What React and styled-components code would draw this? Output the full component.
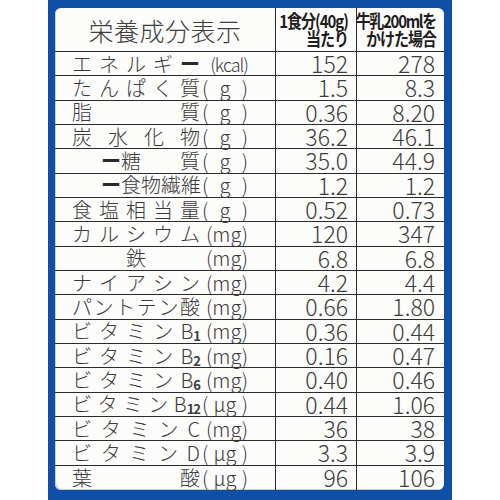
import React from "react";
import styled, { createGlobalStyle } from "styled-components";

const GlobalStyle = createGlobalStyle`
  body {
    margin: 0;
    background: #ffffff;
    font-family: "Noto Sans CJK JP", "Noto Sans", sans-serif;
  }
`;

const rows = [
  { name: ["エ", "ネ", "ル", "ギ", "ー"], unit: ["(kcal)"], a: "152", b: "278" },
  { name: ["た", "ん", "ぱ", "く", "質"], unit: ["(", "g", ")"], a: "1.5", b: "8.3" },
  { name: ["脂", "質"], unit: ["(", "g", ")"], a: "0.36", b: "8.20" },
  { name: ["炭", "水", "化", "物"], unit: ["(", "g", ")"], a: "36.2", b: "46.1" },
  { name: ["ー糖", "質"], indent: 29, unit: ["(", "g", ")"], a: "35.0", b: "44.9" },
  { name: ["ー", "食", "物", "繊", "維"], indent: 29, unit: ["(", "g", ")"], a: "1.2", b: "1.2" },
  { name: ["食", "塩", "相", "当", "量"], unit: ["(", "g", ")"], a: "0.52", b: "0.73" },
  { name: ["カ", "ル", "シ", "ウ", "ム"], unit: ["(mg)"], a: "120", b: "347" },
  { name: ["鉄"], center: true, unit: ["(mg)"], a: "6.8", b: "6.8" },
  { name: ["ナ", "イ", "ア", "シ", "ン"], unit: ["(mg)"], a: "4.2", b: "4.4" },
  { name: ["パ", "ン", "ト", "テ", "ン", "酸"], unit: ["(mg)"], a: "0.66", b: "1.80" },
  { name: ["ビ", "タ", "ミ", "ン"], sub: "1", unit: ["(mg)"], a: "0.36", b: "0.44" },
  { name: ["ビ", "タ", "ミ", "ン"], sub: "2", unit: ["(mg)"], a: "0.16", b: "0.47" },
  { name: ["ビ", "タ", "ミ", "ン"], sub: "6", unit: ["(mg)"], a: "0.40", b: "0.46" },
  { name: ["ビ", "タ", "ミ", "ン"], sub: "12", unit: ["(", "μg", ")"], a: "0.44", b: "1.06" },
  { name: ["ビ", "タ", "ミ", "ン", "C"], unit: ["(mg)"], a: "36", b: "38" },
  { name: ["ビ", "タ", "ミ", "ン", "D"], unit: ["(", "μg", ")"], a: "3.3", b: "3.9" },
  { name: ["葉", "酸"], unit: ["(", "μg", ")"], a: "96", b: "106" },
];

const Frame = styled.div`
  margin-left: 48px;
  width: 404px;
  height: 500px;
  box-sizing: border-box;
  padding: 8px 8px 10px 7px;
  background: #0f4fa8;
`;

const Panel = styled.div`
  height: 100%;
  background: #fcfcfa;
  border-radius: 6px;
  box-shadow: inset 1px -1px 0 #c9ccd2;
  display: grid;
  grid-template-columns: 220px 81px 88px;
  grid-template-rows: 44px repeat(18, minmax(0, 1fr));
  color: #3a3a3a;
`;

const Cell = styled.div`
  display: flex;
  align-items: center;
  box-sizing: border-box;
  min-height: 0;
  border-bottom: ${(p) => (p.$last ? "none" : "1.5px solid #2b2b2b")};
  border-left: ${(p) => (p.$col ? "1.5px solid #2b2b2b" : "none")};
`;

const Title = styled(Cell)`
  justify-content: center;
  font-size: 25px;
  line-height: 1;
  font-weight: 300;
  color: #3d3d3d;
  letter-spacing: 0.5px;
  padding-top: 2px;
`;

const HeadCell = styled(Cell)`
  flex-direction: column;
  align-items: flex-end;
  justify-content: center;
  padding-right: ${(p) => p.$pr}px;
  font-size: 15px;
  font-weight: 700;
  line-height: 18px;
  color: #1e1e1e;
`;

const HeadLine = styled.span`
  white-space: nowrap;
  letter-spacing: ${(p) => p.$ls}px;
  transform: scaleY(1.18);
`;

const Label = styled(Cell)`
  padding: 0 27px 0 17px;
  font-size: 20px;
  line-height: 1;
  font-weight: 300;
  color: #3a3a3a;
`;

const Name = styled.div`
  width: 128px;
  box-sizing: border-box;
  padding-left: ${(p) => p.$indent || 0}px;
  display: flex;
  justify-content: ${(p) => (p.$center ? "center" : "space-between")};
  align-items: center;
`;

const Dash = styled.span`
  font-weight: 700;
  color: #2a2a2a;
`;

const Sub = styled.span`
  font-size: 13px;
  font-weight: 700;
  letter-spacing: -1px;
  position: relative;
  top: 2px;
`;

const Unit = styled.div`
  width: 48px;
  display: flex;
  justify-content: ${(p) => (p.$spread ? "space-between" : "flex-end")};
  align-items: center;
  padding-left: 2px;
  box-sizing: border-box;
  font-size: ${(p) => (p.$tight ? "18px" : "20px")};
  letter-spacing: ${(p) => (p.$tight ? "-1px" : "0")};
`;

const Num = styled(Cell)`
  justify-content: flex-end;
  padding-right: ${(p) => p.$pr}px;
  font-size: 23px;
  font-weight: 300;
  line-height: 1;
  color: #3c3c3c;
`;

const renderToken = (t) => {
  if (t === "ー") return <Dash key="d">ー</Dash>;
  if (t === "ー糖")
    return (
      <span key="d">
        <Dash>ー</Dash>糖
      </span>
    );
  return <span key={t}>{t}</span>;
};

export default function App() {
  return (
    <>
      <GlobalStyle />
      <Frame>
        <Panel>
          <Title>栄養成分表示</Title>
          <HeadCell $col $pr={8}>
            <HeadLine $ls={-1}>1食分(40g)</HeadLine>
            <HeadLine $ls={-1}>当たり</HeadLine>
          </HeadCell>
          <HeadCell $col $pr={8}>
            <HeadLine $ls={-1.3}>牛乳200mlを</HeadLine>
            <HeadLine $ls={-1}>かけた場合</HeadLine>
          </HeadCell>
          {rows.map((r, i) => {
            const last = i === rows.length - 1;
            return (
              <React.Fragment key={i}>
                <Label $last={last}>
                  <Name $indent={r.indent} $center={r.center}>
                    {r.name.map(renderToken)}
                    {r.sub && (
                      <span>
                        B<Sub>{r.sub}</Sub>
                      </span>
                    )}
                  </Name>
                  <Unit $spread={r.unit.length > 1} $tight={r.unit[0] === "(kcal)"}>
                    {r.unit.map((u, k) => (
                      <span key={k}>{u}</span>
                    ))}
                  </Unit>
                </Label>
                <Num $col $last={last} $pr={8}>
                  {r.a}
                </Num>
                <Num $col $last={last} $pr={9}>
                  {r.b}
                </Num>
              </React.Fragment>
            );
          })}
        </Panel>
      </Frame>
    </>
  );
}
